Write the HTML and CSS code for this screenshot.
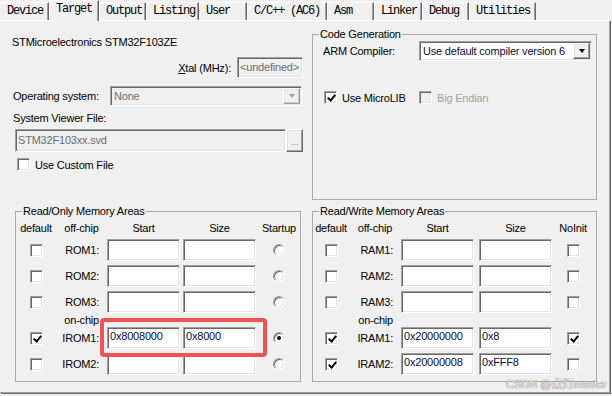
FILE: index.html
```html
<!DOCTYPE html>
<html lang="en">
<head>
    <meta charset="UTF-8">
    <title>Options for Target</title>
    <link rel="stylesheet" href="styles.css">
</head>
<body>
    <div class="tabs">
        <div class="tab">Device</div>
        <div class="tab active">Target</div>
        <div class="tab">Output</div>
        <div class="tab">Listing</div>
        <div class="tab">User</div>
        <div class="tab">C/C++ (AC6)</div>
        <div class="tab">Asm</div>
        <div class="tab">Linker</div>
        <div class="tab">Debug</div>
        <div class="tab">Utilities</div>
    </div>

    <div class="page">
        <div class="top">
            <div class="device">
                <div class="chip">STMicroelectronics STM32F103ZE</div>
                <div class="xtal-row">
                    <span class="xtal-label"><u>X</u>tal (MHz):</span>
                    <div class="field off xtal">&lt;undefined&gt;</div>
                </div>
                <div class="os-row">
                    <span class="os-label">Operating system:</span>
                    <div class="combo off os">
                        <span class="combo-text">None</span>
                        <span class="drop"><i class="arrow"></i></span>
                    </div>
                </div>
                <div class="svf-label">System Viewer File:</div>
                <div class="svf-row">
                    <div class="field off svf">STM32F103xx.svd</div>
                    <div class="dots">...</div>
                </div>
                <div class="check-row custom">
                    <span class="cb"></span>
                    <span>Use Custom File</span>
                </div>
            </div>

            <fieldset class="group codegen">
                <legend>Code Generation</legend>
                <div class="compiler-row">
                    <span class="compiler-label">ARM Compiler:</span>
                    <div class="combo compiler">
                        <span class="combo-text">Use default compiler version 6</span>
                        <span class="drop"><i class="arrow"></i></span>
                    </div>
                </div>
                <div class="lib-row">
                    <div class="check-row lib">
                        <span class="cb on"></span>
                        <span>Use MicroLIB</span>
                    </div>
                    <div class="check-row disabled">
                        <span class="cb off"></span>
                        <span>Big Endian</span>
                    </div>
                </div>
            </fieldset>
        </div>

        <div class="mem">
            <fieldset class="group rom">
                <legend>Read/Only Memory Areas</legend>
                <div class="mrow mhead">
                    <span>default</span>
                    <span>off-chip</span>
                    <span class="colhead">Start</span>
                    <span class="colhead">Size</span>
                    <span>Startup</span>
                </div>
                <div class="mrow">
                    <span class="cb"></span>
                    <span class="mlabel">ROM1:</span>
                    <div class="field cell"></div>
                    <div class="field cell"></div>
                    <span class="radio"></span>
                </div>
                <div class="mrow">
                    <span class="cb"></span>
                    <span class="mlabel">ROM2:</span>
                    <div class="field cell"></div>
                    <div class="field cell"></div>
                    <span class="radio"></span>
                </div>
                <div class="mrow">
                    <span class="cb"></span>
                    <span class="mlabel">ROM3:</span>
                    <div class="field cell"></div>
                    <div class="field cell"></div>
                    <span class="radio"></span>
                </div>
                <div class="mrow onchip">
                    <span></span>
                    <span class="mlabel">on-chip</span>
                </div>
                <div class="mrow after-chip marked">
                    <span class="cb on"></span>
                    <span class="mlabel">IROM1:</span>
                    <div class="field cell">0x8008000</div>
                    <div class="field cell">0x8000</div>
                    <span class="radio on"></span>
                    <div class="highlight"></div>
                </div>
                <div class="mrow">
                    <span class="cb"></span>
                    <span class="mlabel">IROM2:</span>
                    <div class="field cell"></div>
                    <div class="field cell"></div>
                    <span class="radio"></span>
                </div>
            </fieldset>

            <fieldset class="group ram">
                <legend>Read/Write Memory Areas</legend>
                <div class="mrow mhead">
                    <span>default</span>
                    <span>off-chip</span>
                    <span class="colhead">Start</span>
                    <span class="colhead">Size</span>
                    <span>NoInit</span>
                </div>
                <div class="mrow">
                    <span class="cb"></span>
                    <span class="mlabel">RAM1:</span>
                    <div class="field cell"></div>
                    <div class="field cell"></div>
                    <span class="cb"></span>
                </div>
                <div class="mrow">
                    <span class="cb"></span>
                    <span class="mlabel">RAM2:</span>
                    <div class="field cell"></div>
                    <div class="field cell"></div>
                    <span class="cb"></span>
                </div>
                <div class="mrow">
                    <span class="cb"></span>
                    <span class="mlabel">RAM3:</span>
                    <div class="field cell"></div>
                    <div class="field cell"></div>
                    <span class="cb"></span>
                </div>
                <div class="mrow onchip">
                    <span></span>
                    <span class="mlabel">on-chip</span>
                </div>
                <div class="mrow after-chip">
                    <span class="cb on"></span>
                    <span class="mlabel">IRAM1:</span>
                    <div class="field cell">0x20000000</div>
                    <div class="field cell">0x8</div>
                    <span class="cb on"></span>
                </div>
                <div class="mrow">
                    <span class="cb on"></span>
                    <span class="mlabel">IRAM2:</span>
                    <div class="field cell">0x20000008</div>
                    <div class="field cell">0xFFF8</div>
                    <span class="cb"></span>
                </div>
            </fieldset>
        </div>
    </div>

    <div class="watermark">CSDN @点灯master</div>
</body>
</html>
```

FILE: styles.css
```css
* {
    box-sizing: border-box;
}

body {
    position: relative;
    width: 612px;
    height: 396px;
    margin: 0;
    overflow: hidden;
    background: #f0f0f0;
    font-family: "Liberation Sans", Arial, sans-serif;
    font-size: 11px;
    letter-spacing: -0.2px;
    color: #000;
}

/* tab strip */
.tabs {
    display: flex;
    align-items: flex-end;
    height: 20px;
}

.tab {
    height: 18px;
    padding-left: 6px;
    font-family: "Liberation Mono", monospace;
    font-size: 12px;
    letter-spacing: -1.2px;
    line-height: 17px;
    white-space: pre;
    border-top: 1px solid #fff;
    border-left: 1px solid #fff;
    border-right: 1px solid #696969;
    box-shadow: inset -1px 0 0 #a0a0a0;
}

.tab.active {
    position: relative;
    z-index: 1;
    height: 21px;
    margin-bottom: -1px;
    line-height: 16px;
    background: #f0f0f0;
}

.tab:nth-child(1) { width: 49px; border-left-color: transparent; }
.tab:nth-child(2) { width: 50px; }
.tab:nth-child(3) { width: 47px; }
.tab:nth-child(4) { width: 53px; }
.tab:nth-child(5) { width: 48px; }
.tab:nth-child(6) { width: 80px; }
.tab:nth-child(7) { width: 47px; }
.tab:nth-child(8) { width: 48px; }
.tab:nth-child(9) { width: 47px; }
.tab:nth-child(10) { width: 67px; }

.page {
    width: 610px;
    height: 373px;
    border-top: 1px solid #fff;
    border-right: 1px solid #a0a0a0;
    border-bottom: 1px solid #a0a0a0;
    box-shadow: 1px 1px 0 #696969;
}

.top {
    display: flex;
    height: 183px;
}

/* 3d edges */
.field,
.combo,
.cb,
.radio {
    border: 1px solid;
    border-color: #a0a0a0 #fff #fff #a0a0a0;
    box-shadow: inset 1px 1px 0 #696969, inset -1px -1px 0 #e3e3e3;
    background: #fff;
}

.drop,
.dots {
    border: 1px solid;
    border-color: #fff #696969 #696969 #fff;
    box-shadow: inset -1px -1px 0 #a0a0a0, inset 1px 1px 0 #e3e3e3;
    background: #f0f0f0;
}

.field {
    padding: 2px 0 0 2px;
    line-height: 13px;
    color: #0c0c3a;
    white-space: nowrap;
    overflow: hidden;
}

.field.off,
.combo.off {
    background: #f0f0f0;
    color: #6d6d6d;
}

/* device column */
.device {
    width: 306px;
    padding: 14px 3px 0 12px;
}

.chip {
    line-height: 14px;
}

.xtal-row {
    display: flex;
    justify-content: flex-end;
    align-items: center;
    height: 21px;
    margin-top: 8px;
}

.xtal-label {
    margin-right: 6px;
}

.xtal {
    width: 66px;
    height: 21px;
    padding-top: 3px;
}

.os-row {
    display: flex;
    align-items: center;
    height: 20px;
    margin-top: 8px;
    padding-left: 1px;
}

.os-label {
    width: 97px;
}

.combo {
    display: flex;
    align-items: center;
    height: 20px;
}

.combo-text {
    flex: 1;
    padding-left: 3px;
    white-space: nowrap;
}

.drop {
    display: flex;
    align-items: center;
    justify-content: center;
    width: 17px;
    height: 16px;
    margin-right: 1px;
}

.arrow {
    width: 0;
    height: 0;
    border-left: 3.5px solid transparent;
    border-right: 3.5px solid transparent;
    border-top: 4px solid #000;
}

.off .arrow {
    border-top-color: #a0a0a0;
}

.off .drop {
    box-shadow: inset -1px -1px 0 #c8c8c8, inset 1px 1px 0 #e3e3e3;
    border-color: #fff #a0a0a0 #a0a0a0 #fff;
}

.os {
    width: 192px;
}

.svf-label {
    margin-top: 5px;
    padding-left: 1px;
    line-height: 14px;
}

.svf-row {
    display: flex;
    height: 23px;
    margin-top: 4px;
    padding-left: 3px;
}

.svf {
    width: 271px;
    padding-top: 4px;
}

.dots {
    width: 17px;
    padding-top: 6px;
    text-align: center;
    font-size: 9px;
    line-height: 12px;
    color: #808080;
}

.check-row {
    display: flex;
    align-items: center;
    gap: 5px;
}

.custom {
    margin-top: 6px;
    padding-left: 5px;
}

/* check boxes & radios */
.cb {
    position: relative;
    display: block;
    width: 13px;
    height: 13px;
}

.cb.on::after {
    content: "";
    position: absolute;
    left: 4px;
    top: 1px;
    width: 3px;
    height: 6px;
    border: solid #000;
    border-width: 0 2px 2px 0;
    transform: rotate(40deg);
}

.cb.off {
    background: #f0f0f0;
}

.radio {
    position: relative;
    display: block;
    width: 12px;
    height: 12px;
    border-radius: 50%;
}

.radio.on::after {
    content: "";
    position: absolute;
    left: 3px;
    top: 3px;
    width: 4px;
    height: 4px;
    border-radius: 50%;
    background: #000;
}

/* group boxes */
.group {
    margin: 0;
    padding: 0;
    min-width: 0;
    border: 1px solid #a9a9a9;
}

.group legend {
    margin-left: 6px;
    padding: 0 1px;
    line-height: 14px;
}

.codegen {
    width: 285px;
    height: 173px;
    margin: 6px 0 0 6px;
}

.compiler-row {
    display: flex;
    align-items: center;
    height: 20px;
    padding-left: 10px;
}

.compiler-label {
    width: 96px;
}

.compiler {
    width: 173px;
}

.compiler .combo-text {
    color: #0c0c3a;
}

.lib-row {
    display: flex;
    align-items: center;
    margin-top: 30px;
    padding-left: 11px;
}

.lib {
    width: 95px;
}

.disabled {
    color: #a0a0a0;
}

/* memory areas */
.mem {
    display: flex;
    gap: 11px;
    padding-left: 15px;
}

.rom {
    width: 286px;
    height: 178px;
}

.ram {
    width: 285px;
    height: 178px;
}

.mrow {
    display: grid;
    align-items: center;
    justify-items: center;
    height: 22px;
    margin-top: 4px;
}

.rom .mrow {
    grid-template-columns: 40px 51px 76px 76px 40px;
}

.ram .mrow {
    grid-template-columns: 36px 52px 78px 74px 40px;
}

.mrow.mhead {
    height: 14px;
    margin-top: 3px;
}

.colhead {
    justify-self: start;
    width: 73px;
    text-align: center;
}

.mlabel {
    justify-self: stretch;
    padding-right: 8px;
    text-align: right;
}

.cell {
    justify-self: start;
    width: 73px;
    height: 22px;
}

.mrow.onchip {
    height: 14px;
    margin-top: 0;
}

.mrow.after-chip {
    margin-top: 0;
}

.marked {
    position: relative;
}

.highlight {
    position: absolute;
    left: 84px;
    top: -9px;
    width: 167px;
    height: 39px;
    border: 4px solid #f25252;
    border-radius: 4px;
}

.watermark {
    position: absolute;
    left: 506px;
    top: 377px;
    font-family: "Liberation Sans", "Noto Sans CJK SC", sans-serif;
    font-size: 11px;
    line-height: 14px;
    letter-spacing: 0;
    white-space: nowrap;
    color: #fafafa;
    text-shadow: 0 0 1px #6a6a6a, 0 0 1px #6a6a6a;
}
```
